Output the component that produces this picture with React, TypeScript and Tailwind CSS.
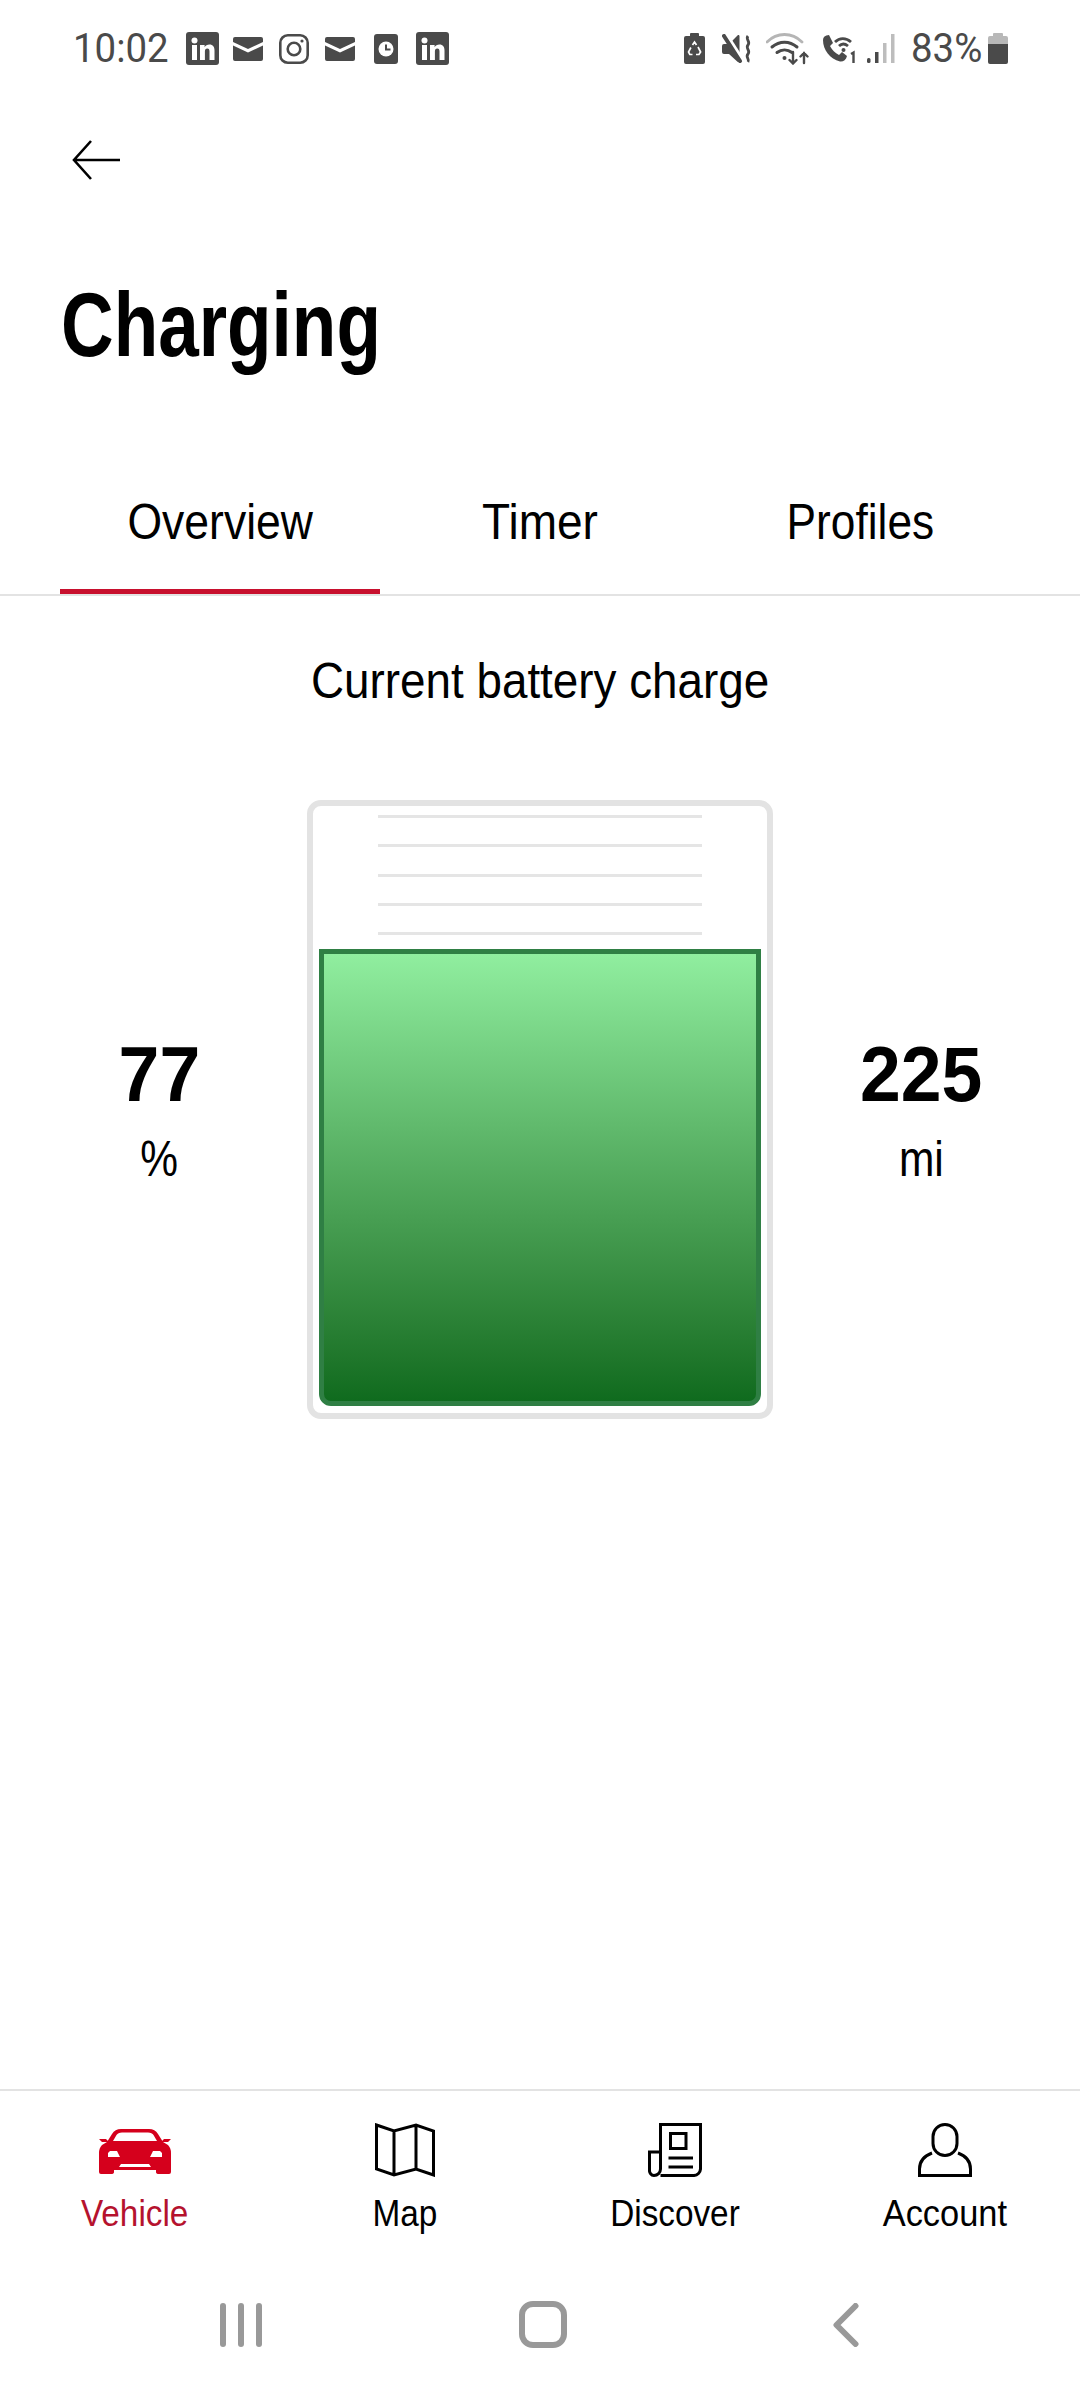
import React from 'react';

const sans = 'font-["Liberation_Sans",sans-serif]';

const LinkedIn = () => (
  <svg width="33" height="33" viewBox="0 0 33 33">
    <rect width="33" height="33" rx="3" fill="#4a4a4a" />
    <circle cx="8.5" cy="8.5" r="3" fill="#fff" />
    <rect x="6" y="13" width="5" height="15" fill="#fff" />
    <path d="M14 13h4.6v2.2c1-1.6 2.6-2.6 4.8-2.6 3.6 0 5.1 2.4 5.1 6V28h-5v-8.4c0-1.8-.6-3-2.200-3-1.700 0-2.400 1.200-2.400 3V28H14z" fill="#fff" />
  </svg>
);

const Mail = () => (
  <svg width="30" height="24" viewBox="0 0 30 24">
    <path d="M2 0h26a2 2 0 0 1 2 2v3L15 12 0 5V2a2 2 0 0 1 2-2z" fill="#4a4a4a" />
    <path d="M0 8.500 15 15.500 30 8.500V22a2 2 0 0 1-2 2H2a2 2 0 0 1-2-2z" fill="#4a4a4a" />
  </svg>
);

const Instagram = () => (
  <svg width="30" height="30" viewBox="0 0 30 30" fill="none" stroke="#4a4a4a" strokeWidth="2.6">
    <rect x="1.300" y="1.300" width="27.400" height="27.400" rx="7.500" />
    <circle cx="15" cy="15" r="6.300" />
    <circle cx="23" cy="7" r="1.600" fill="#4a4a4a" stroke="none" />
  </svg>
);

const ClockApp = () => (
  <svg width="24" height="30" viewBox="0 0 24 30">
    <rect width="24" height="30" rx="3" fill="#4a4a4a" />
    <circle cx="12" cy="15" r="7.500" fill="#fff" />
    <path d="M12 10.500V15.500H16.500" fill="none" stroke="#4a4a4a" strokeWidth="2" />
  </svg>
);

const RecycleBattery = () => (
  <svg width="21" height="31" viewBox="0 0 21 31">
    <path d="M7 0h7a1 1 0 0 1 1 1v2h4a2 2 0 0 1 2 2v24a2 2 0 0 1-2 2H2a2 2 0 0 1-2-2V5a2 2 0 0 1 2-2h4V1a1 1 0 0 1 1-1z" fill="#4a4a4a" />
    <path d="M8.500 12 10.500 9l2 3M14 14l2.600 5-1.600 2.500h-3M8.500 21.500H5.800L4.500 19l2.400-4.500" fill="none" stroke="#fff" strokeWidth="1.700" />
  </svg>
);

const Mute = () => (
  <svg width="30" height="29" viewBox="0 0 30 29">
    <path d="M0 12a2 2 0 0 1 2-2h5L15.500 1.500c.8-.8 2-.3 2 .8V27c0 1.100-1.200 1.600-2 .8L7 20H2a2 2 0 0 1-2-2z" fill="#4a4a4a" />
    <path d="M4 2 20 27" stroke="#fff" strokeWidth="6" />
    <path d="M2 2 18 27" stroke="#4a4a4a" strokeWidth="4" strokeLinecap="round" />
    <path d="M26 2c-3 3.500 3 5.500 0 9s3 5.500 0 9 2 5 0 8" fill="none" stroke="#4a4a4a" strokeWidth="2.800" />
  </svg>
);

const Wifi = () => (
  <svg width="44" height="32" viewBox="0 0 44 32" fill="none" strokeLinecap="round">
    <path d="M1 9C11-1 26-1 36 9" stroke="#b5b5b5" strokeWidth="2.800" />
    <path d="M6 14c7.500-6.500 17.500-6.500 25 0" stroke="#4a4a4a" strokeWidth="3" />
    <path d="M11 19.500c4.500-3.500 10.500-3.500 15 0" stroke="#4a4a4a" strokeWidth="3" />
    <circle cx="18.500" cy="25" r="2" fill="#4a4a4a" />
    <path d="M27 19v11M23.500 27l3.500 3.500 3.500-3.500M38 30V20M34.500 23.500l3.500-3.500 3.500 3.500" stroke="#4a4a4a" strokeWidth="2.400" />
  </svg>
);

const CallWifi = () => (
  <svg width="35" height="29" viewBox="0 0 35 29" fill="none">
    <path d="M1 6C1 3 3 1.500 7 1L11 9 8 12C10 16 13 19 17 21L20 18 25 22C24 26 21 28 18 27.500 8 25 1 16 1 6Z" fill="#4a4a4a" />
    <path d="M13 8c4.500-4.500 11-4.500 16 0M17 12c2.500-2.500 6-2.500 9 0" stroke="#4a4a4a" strokeWidth="2.800" />
    <circle cx="21.500" cy="16" r="2" fill="#4a4a4a" />
    <path d="M29 20l2.500-1.500V29" stroke="#4a4a4a" strokeWidth="2.400" />
  </svg>
);

const Signal = () => (
  <svg width="28" height="29" viewBox="0 0 28 29">
    <rect x="0" y="24" width="3.500" height="5" rx="1.500" fill="#4a4a4a" />
    <rect x="8" y="18" width="3.500" height="11" fill="#4a4a4a" />
    <rect x="16" y="9" width="3.500" height="20" fill="#bdbdbd" />
    <rect x="24" y="0" width="3.500" height="29" fill="#bdbdbd" />
  </svg>
);

const BatteryLevel = () => (
  <svg width="20" height="31" viewBox="0 0 20 31">
    <path d="M6 0h8a1 1 0 0 1 1 1v2h3a2 2 0 0 1 2 2v6H0V5a2 2 0 0 1 2-2h3V1a1 1 0 0 1 1-1z" fill="#b8b8b8" />
    <path d="M0 11h20v18a2 2 0 0 1-2 2H2a2 2 0 0 1-2-2z" fill="#4a4a4a" />
  </svg>
);

const StatusBar = () => (
  <div className="h-[96px] flex items-center justify-between pl-[73px] pr-[72px] pt-[1px] text-[#4a4a4a] font-['Roboto',sans-serif]">
    <div className="flex items-center">
      <span className="text-[40px] leading-none w-[96px] mr-[17px] inline-block origin-left scale-x-[0.96]">10:02</span>
      <div className="flex items-center gap-[14px]">
        <LinkedIn />
        <Mail />
        <span className="ml-[2px] flex"><Instagram /></span>
        <span className="ml-[2px] flex"><Mail /></span>
        <span className="ml-[5px] flex"><ClockApp /></span>
        <span className="ml-[4px] flex"><LinkedIn /></span>
      </div>
    </div>
    <div className="flex items-center">
      <RecycleBattery />
      <span className="ml-[17px] flex"><Mute /></span>
      <span className="ml-[14px] flex"><Wifi /></span>
      <span className="ml-[12px] flex"><CallWifi /></span>
      <span className="ml-[10px] flex"><Signal /></span>
      <span className="ml-[16px] text-[40px] leading-none w-[71px] inline-block origin-left scale-x-[0.96]">83%</span>
      <span className="ml-[6px] flex"><BatteryLevel /></span>
    </div>
  </div>
);

const Tabs = () => (
  <div className="border-b-2 border-[#e3e3e3]">
    <div className={`mx-[60px] grid grid-cols-3 text-[50px] leading-none text-black ${sans}`}>
      <div className="h-[101px] flex justify-center pt-[4px] border-b-[5px] border-[#c8102e]">
        <span className="inline-block scale-x-[0.89]">Overview</span>
      </div>
      <div className="h-[101px] flex justify-center pt-[4px]">
        <span className="inline-block scale-x-[0.92]">Timer</span>
      </div>
      <div className="h-[101px] flex justify-center pt-[4px]">
        <span className="inline-block scale-x-[0.885]">Profiles</span>
      </div>
    </div>
  </div>
);

const Battery = () => (
  <div className="relative w-[466px] h-[619px] rounded-[14px] border-[6px] border-[#e3e3e3] flex flex-col justify-end px-[6px] pb-[7px]">
    <div className="absolute left-[65px] right-[65px] top-[9px] flex flex-col gap-[26.25px]">
      {[0, 1, 2, 3, 4].map((i) => (
        <div key={i} className="h-[3px] bg-[#e5e5e5]" />
      ))}
    </div>
    <div className="h-[457px] border-[5px] border-[#2f7f44] rounded-b-[12px] bg-linear-to-b from-[#90ee9f] to-[#0f6b1e]" />
  </div>
);

const Stat = ({ value, unit, className }: { value: string; unit: string; className: string }) => (
  <div className={`w-[307px] flex flex-col items-center text-black ${sans} ${className}`}>
    <span className="text-[78px] leading-[78px] font-bold inline-block scale-x-[0.94]">{value}</span>
    <span className="text-[50px] leading-[50px] mt-[21px] inline-block scale-x-[0.85]">{unit}</span>
  </div>
);

const NavItem = ({ label, active, wide, children }: { label: string; active?: boolean; wide?: boolean; children: React.ReactNode }) => (
  <div className="flex flex-col items-center">
    <div className="h-[56px] flex items-end justify-center">{children}</div>
    <span className={`mt-[18px] text-[37px] leading-[37px] inline-block ${wide ? 'scale-x-[0.93]' : 'scale-x-[0.9]'} ${sans} ${active ? 'text-[#b5122e]' : 'text-black'}`}>
      {label}
    </span>
  </div>
);

export default function App() {
  return (
    <div className="w-[1080px] h-[2400px] bg-white flex flex-col overflow-hidden">
      <StatusBar />

      <div className="h-[128px] pl-[72px] pt-[44px]">
        <svg width="50" height="40" viewBox="0 0 50 40" fill="none" stroke="#000" strokeWidth="2.6">
          <path d="M48 20H2M19 1 2 20l17 19" />
        </svg>
      </div>

      <h1 className={`pl-[61px] h-[270px] text-[90px] leading-none pt-[56px] font-bold text-black ${sans}`}>
        <span className="inline-block origin-left scale-x-[0.81]">Charging</span>
      </h1>

      <div className="-mt-[1px]">
        <Tabs />
      </div>

      <div className={`text-center text-[50px] leading-none text-black mt-[60px] ${sans}`}>
        <span className="inline-block scale-x-[0.916]">Current battery charge</span>
      </div>

      <div className="flex items-center mt-[94px]">
        <Stat value="77" unit="%" className="pl-[11px]" />
        <Battery />
        <Stat value="225" unit="mi" className="pr-[10px]" />
      </div>

      <div className="flex-1" />

      <div className="border-t-2 border-[#e3e3e3] grid grid-cols-4 h-[192px] pt-[30px]">
        <NavItem label="Vehicle" active>
          <svg width="72" height="45" viewBox="0 0 72 45" className="mb-[3px]">
            <path d="M3 16 8 13 13 5Q16 0 22 0H50Q56 0 59 5L64 13 69 16Q72 19 72 24V43Q72 45 70 45H60Q57 45 57 43V41H15V43Q15 45 12 45H2Q0 45 0 43V24Q0 19 3 16Z" fill="#d5001c" />
            <path d="M0 10H7L10 13H3ZM72 10H65L62 13H69Z" fill="#d5001c" />
            <path d="M14 12 17.500 6Q19 3.500 23 3.500H49Q53 3.500 54.500 6L58 12Z" fill="#fff" />
            <path d="M11 22H18L21 28H9V24ZM61 22H54L51 28H63V24Z" fill="#fff" />
            <path d="M22 35H50L52 38H20Z" fill="#fff" />
          </svg>
        </NavItem>
        <NavItem label="Map">
          <svg width="60" height="54" viewBox="0 0 60 54" fill="none" stroke="#000" strokeWidth="3">
            <path d="M1.500 2 19 8 41 2 58.500 8V52L41 46 19 52 1.500 46ZM19 8V52M41 2V46" />
          </svg>
        </NavItem>
        <NavItem label="Discover">
          <svg width="54" height="54" viewBox="0 0 54 54" fill="none" stroke="#000" strokeWidth="3">
            <path d="M12.500 52.500H45A7 7 0 0 0 52.500 45V1.500H12.500V46A6.500 6.500 0 0 1 6 52.500 5 5 0 0 1 1.500 47V29H12.500" />
            <path d="M22.500 10.500H38V25.500H22.500ZM20.500 35H45M20.500 44H45" />
          </svg>
        </NavItem>
        <NavItem label="Account" wide>
          <svg width="54" height="54" viewBox="0 0 54 54" fill="none" stroke="#000" strokeWidth="3">
            <rect x="15" y="1.500" width="24" height="31" rx="12" />
            <path d="M14 30C6 33 1.500 38 1.500 46V52.500H52.500V46C52.500 38 48 33 40 30" />
          </svg>
        </NavItem>
      </div>

      <div className="h-[119px] flex items-start pl-[220px]">
        <div className="flex gap-[12px] pt-[22px]">
          <div className="w-[6px] h-[44px] rounded-full bg-[#999]" />
          <div className="w-[6px] h-[44px] rounded-full bg-[#999]" />
          <div className="w-[6px] h-[44px] rounded-full bg-[#999]" />
        </div>
        <div className="ml-[257px] pt-[20px]">
          <div className="w-[48px] h-[47px] rounded-[14px] border-[6px] border-[#999]" />
        </div>
        <div className="ml-[266px] pt-[22px]">
          <svg width="26" height="44" viewBox="0 0 26 44" fill="none" stroke="#999" strokeWidth="6" strokeLinecap="round" strokeLinejoin="round" className="block">
            <path d="M22.500 3 3.500 22 22.500 41" />
          </svg>
        </div>
      </div>
    </div>
  );
}
